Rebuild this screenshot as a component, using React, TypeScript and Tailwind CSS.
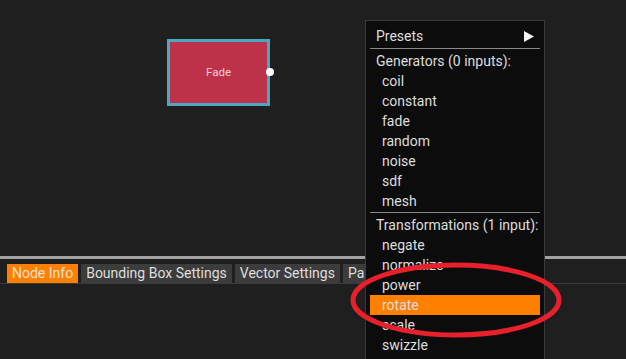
import React from 'react'

const generators = ['coil', 'constant', 'fade', 'random', 'noise', 'sdf', 'mesh']
const transformations = ['negate', 'normalize', 'power', 'rotate', 'scale', 'swizzle']
const tabs = ['Node Info', 'Bounding Box Settings', 'Vector Settings', 'Parameters']

function MenuItem({ label, active }: { label: string; active?: boolean }) {
	return (
		<div className={`h-5 leading-5 pl-3 ${active ? 'bg-[#ff7f00]' : ''}`}>{label}</div>
	)
}

export default function App() {
	return (
		<div
			className="relative w-[626px] h-[359px] overflow-hidden bg-[#1f1f1f] text-[#dedede] text-[14px]"
			style={{ fontFamily: 'Roboto, "Liberation Sans", sans-serif' }}
		>
			{/* canvas */}
			<div className="relative h-[256px]">
				<div className="absolute left-[167px] top-[39px] w-[103px] h-[67px] border-[3px] border-[#4ba6c1] bg-[#bd3149] flex items-center justify-center">
					<span className="text-[11.5px] text-[#f2d3d8]">Fade</span>
				</div>
				<div className="absolute left-[266px] top-[68px] w-[8px] h-[8px] rounded-full bg-white" />
			</div>

			{/* splitter */}
			<div className="h-[3px] bg-[#a3a3a3]" />

			{/* tab bar */}
			<div className="flex gap-[3px] pl-[7px] pt-[5px] border-b border-[#3a3a3a]">
				{tabs.map((t, i) => (
					<div
						key={t}
						className={`h-[19px] leading-[19px] px-[5px] whitespace-nowrap ${i === 0 ? 'bg-[#ff7f00] text-[#f3e3d3]' : 'bg-[#3c3c3c]'}`}
					>
						{t}
					</div>
				))}
			</div>

			{/* presets menu */}
			<div className="absolute left-[365px] top-[20px] w-[180px] h-[360px] bg-[#0c0c0c] border border-[#3a3a3a] pt-[5px] pl-[4px] pr-[4px]">
				<div className="h-5 leading-5 pl-[6px] flex items-center justify-between pr-[6px]">
					<span>Presets</span>
					<svg width="10" height="11" viewBox="0 0 10 11">
						<path d="M0 0 L10 5.5 L0 11 Z" fill="#f2f2f2" />
					</svg>
				</div>
				<div className="h-px bg-[#8a8a8a] mt-[2px] mb-[2px]" />
				<div className="h-5 leading-5 pl-[6px]">Generators (0 inputs):</div>
				{generators.map((g) => (
					<MenuItem key={g} label={g} />
				))}
				<div className="h-px bg-[#8a8a8a] mt-[1px] mb-[2px]" />
				<div className="h-5 leading-5 pl-[6px]">Transformations (1 input):</div>
				{transformations.map((t) => (
					<MenuItem key={t} label={t} active={t === 'rotate'} />
				))}
			</div>

			{/* red annotation */}
			<svg className="absolute left-0 top-0 pointer-events-none" width="626" height="359">
				<ellipse cx="456" cy="300" rx="103" ry="35" fill="none" stroke="#e8202b" strokeWidth="5" />
			</svg>
		</div>
	)
}
